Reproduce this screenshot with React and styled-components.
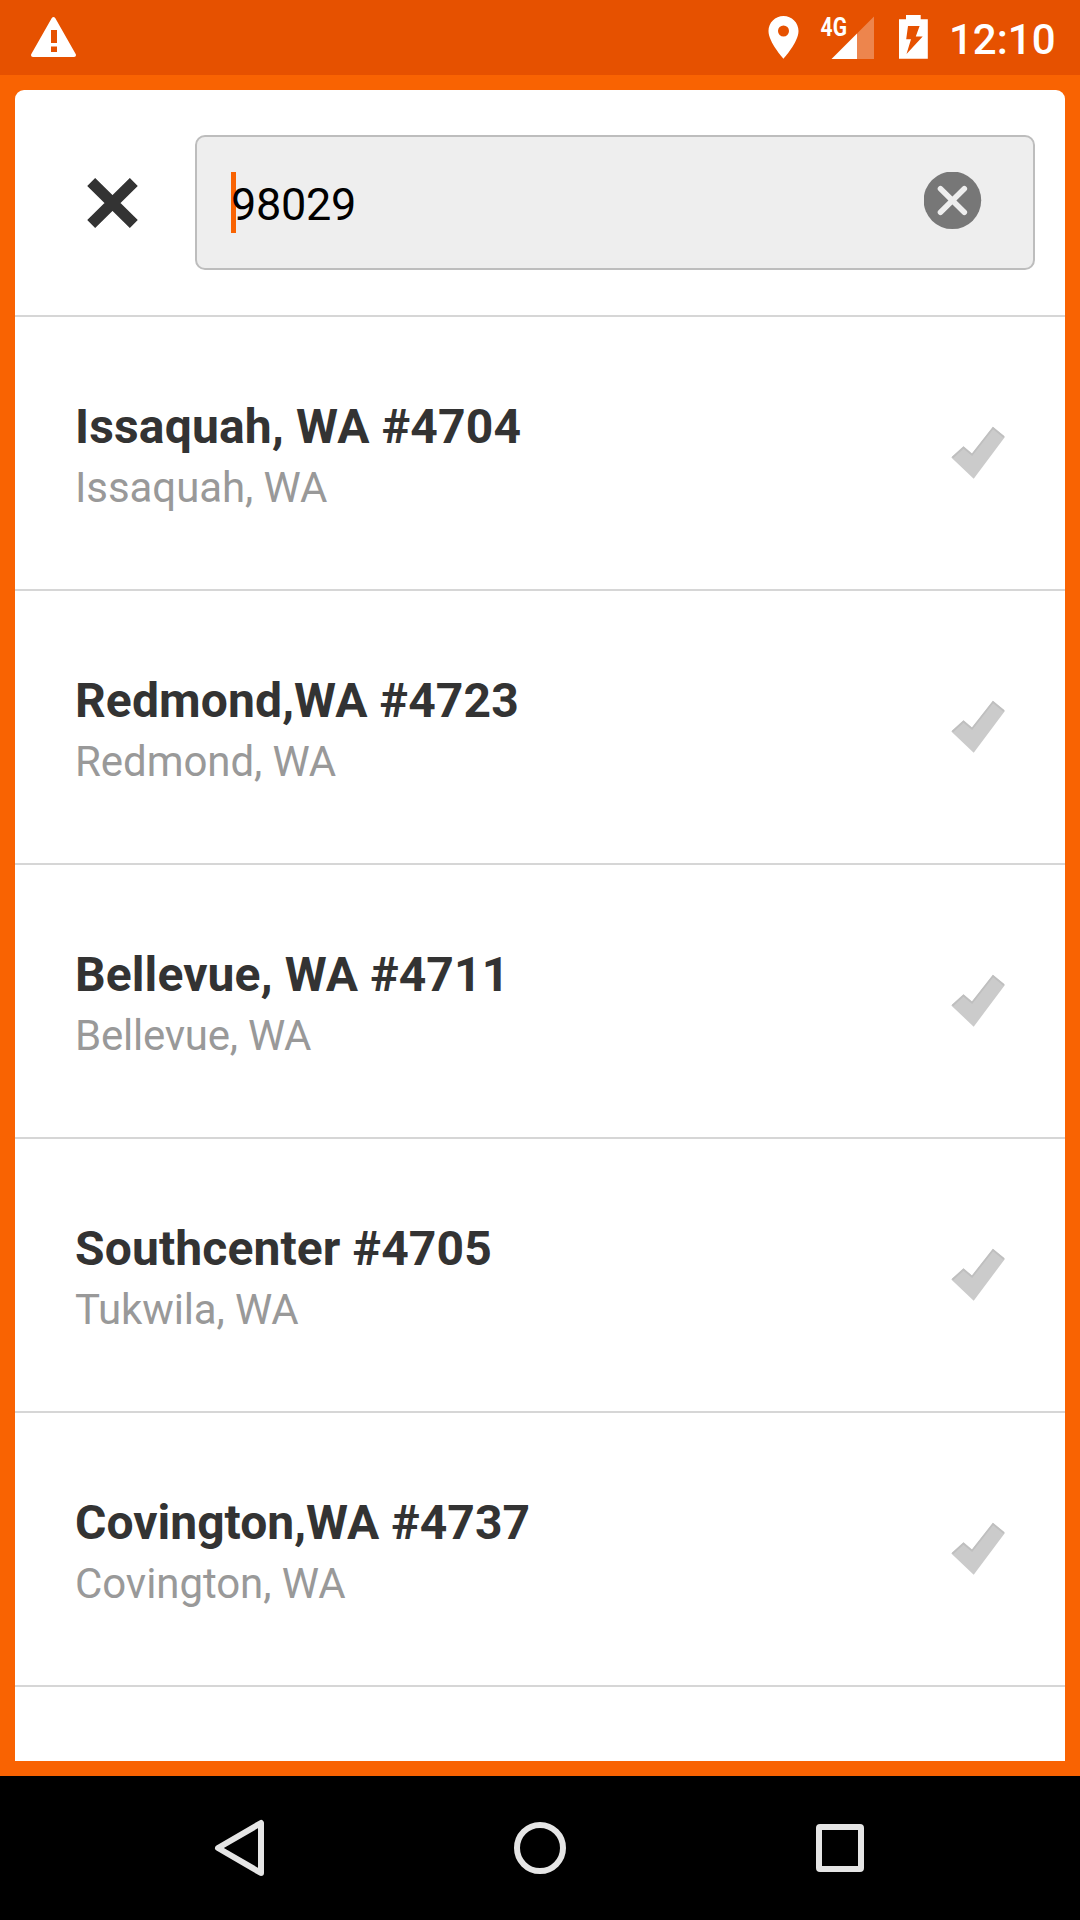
import React from "react";
import styled, { createGlobalStyle } from "styled-components";

const Global = createGlobalStyle`
  * { box-sizing: border-box; }
  body { margin: 0; background: #000; font-family: Roboto, "Liberation Sans", sans-serif; }
`;

const Screen = styled.div`
  width: 1080px;
  height: 1920px;
  display: flex;
  flex-direction: column;
  overflow: hidden;
  background: #f96302;
`;

const StatusBar = styled.header`
  height: 75px;
  flex: none;
  display: flex;
  align-items: center;
  padding: 0 24px 0 31px;
  background: #e65100;
`;

const StatusIcons = styled.div`
  margin-left: auto;
  display: flex;
  align-items: center;
`;

const Glyph = styled.svg`
  display: block;
  flex: none;
  width: ${(p) => p.$w}px;
  height: ${(p) => p.$h}px;
  margin-right: ${(p) => p.$gap || 0}px;
`;

const Clock = styled.time`
  width: 107px;
  font-size: 42px;
  line-height: 50px;
  font-weight: 500;
  color: #fff;
  white-space: nowrap;
  padding-top: 5px;
`;

const Content = styled.main`
  flex: 1;
  min-height: 0;
  padding: 15px;
  display: flex;
`;

const Card = styled.section`
  flex: 1;
  display: flex;
  flex-direction: column;
  background: #fff;
  border-radius: 9px 9px 0 0;
  overflow: hidden;
`;

const SearchBar = styled.div`
  height: 227px;
  flex: none;
  display: flex;
  align-items: center;
  padding: 0 30px 0 72px;
  border-bottom: 2px solid #d6d6d6;
`;

const IconButton = styled.button`
  display: block;
  border: 0;
  padding: 0;
  background: none;
  margin-right: ${(p) => p.$gap || 0}px;
`;

const Field = styled.div`
  flex: 1;
  height: 135px;
  display: flex;
  align-items: center;
  justify-content: space-between;
  padding: 0 51px 4px 34px;
  border: 2px solid #bdbdbd;
  border-radius: 10px;
  background: #eee;
`;

const Query = styled.div`
  display: flex;
  align-items: center;
  height: 61px;
  margin-top: 4px;
  font-size: 45px;
  line-height: 61px;
  letter-spacing: -0.3px;
  color: #000;
`;

const Caret = styled.span`
  width: 5px;
  height: 61px;
  margin-right: -5px;
  background: #f96302;
`;

const QueryText = styled.span`
  padding-top: 4px;
  z-index: 1;
`;

const StoreList = styled.ul`
  margin: 0;
  padding: 0;
  list-style: none;
`;

const StoreRow = styled.li`
  height: 274px;
  display: flex;
  align-items: center;
  justify-content: space-between;
  padding: 0 60px;
  border-bottom: 2px solid #d6d6d6;
`;

const StoreText = styled.div`
  display: flex;
  flex-direction: column;
  gap: 8px;
  padding-top: 4px;
`;

const StoreName = styled.div`
  font-size: 48px;
  line-height: 56px;
  font-weight: 700;
  letter-spacing: ${(p) => p.$tracking}px;
  color: #333;
`;

const StoreCity = styled.div`
  font-size: 42px;
  line-height: 49px;
  letter-spacing: ${(p) => p.$tracking}px;
  color: #999;
`;

const NavBar = styled.nav`
  height: 144px;
  flex: none;
  display: flex;
  align-items: center;
  justify-content: center;
  gap: 240px;
  background: #000;
`;

const stores = [
  { name: "Issaquah, WA #4704", city: "Issaquah, WA", nameTracking: 0.17, cityTracking: -0.07 },
  { name: "Redmond,WA #4723", city: "Redmond, WA", nameTracking: 0.12, cityTracking: -0.07 },
  { name: "Bellevue, WA #4711", city: "Bellevue, WA", nameTracking: 0.12, cityTracking: -0.24 },
  { name: "Southcenter #4705", city: "Tukwila, WA", nameTracking: 0.12, cityTracking: -0.12 },
  { name: "Covington,WA #4737", city: "Covington, WA", nameTracking: 0.02, cityTracking: -0.06 },
];

const Warning = () => (
  <Glyph $w={45} $h={75} viewBox="31 0 45 75">
    <path
      fill="#fff"
      fillRule="evenodd"
      d="M51.8 18 Q53.5 15.8 55.2 18 L75.8 54.2 Q76.6 57 74 57 H33 Q30.4 57 31.2 54.2 Z M51 30 V43 H57 V30 Z M51 46.5 V52 H57 V46.5 Z"
    />
  </Glyph>
);

const Pin = () => (
  <Glyph $w={31} $h={75} $gap={21} viewBox="768 0 31 75">
    <path
      fill="#fff"
      fillRule="evenodd"
      d="M783.5 16 C775.2 16 768.5 22.7 768.5 31 C768.5 42.2 783.5 58.7 783.5 58.7 C783.5 58.7 798.5 42.2 798.5 31 C798.5 22.7 791.8 16 783.5 16 Z M783.5 25.5 A5.5 5.5 0 1 1 783.5 36.5 A5.5 5.5 0 1 1 783.5 25.5 Z"
    />
  </Glyph>
);

const Signal = () => (
  <Glyph $w={54} $h={75} $gap={25} viewBox="820 0 54 75">
    <path fill="#fff" fillOpacity="0.3" d="M857 33.5 L874 16.5 V59 H857 Z" />
    <path fill="#fff" d="M831.5 59 L857 33.5 V59 Z" />
    <text
      x="820.6"
      y="35.5"
      fill="#fff"
      fontFamily="Roboto, sans-serif"
      fontSize="25"
      fontWeight="700"
      textLength="26.4"
      lengthAdjust="spacingAndGlyphs"
    >
      4G
    </text>
  </Glyph>
);

const Battery = () => (
  <Glyph $w={29} $h={75} $gap={21} viewBox="899 0 29 75">
    <path
      fill="#fff"
      fillRule="evenodd"
      d="M906 15 H920.7 V19.3 H927.8 V58.8 H899 V19.3 H906 Z M908 26 L906.2 39.2 H911 L906.5 54 L922.7 36.6 H915.8 L919.6 26 Z"
    />
  </Glyph>
);

const Close = () => (
  <Glyph $w={51} $h={50} viewBox="87 178 51 50">
    <path d="M91.2 182 L133.8 224 M133.8 182 L91.2 224" stroke="#333" strokeWidth="11.3" fill="none" />
  </Glyph>
);

const Clear = () => (
  <Glyph $w={58} $h={58} viewBox="924 172 58 58">
    <circle cx="952.4" cy="200.3" r="28.8" fill="#777" />
    <path
      d="M940.5 188.8 L964.3 212.2 M964.3 188.8 L940.5 212.2"
      stroke="#eee"
      strokeWidth="5.6"
      strokeLinecap="round"
    />
  </Glyph>
);

const Check = () => (
  <Glyph $w={54} $h={54} viewBox="951 426 54 54">
    <path fill="#cbcbcb" d="M951.3 457.5 L963.5 446.5 L972 453.8 L993 427 L1004.9 437 L973.7 478.7 Z" />
    <path
      fill="none"
      stroke="#bfbfbf"
      strokeWidth="1.8"
      d="M952.5 457.5 L963.5 447.5 L972 454.8 L993 428 L1004 437"
    />
  </Glyph>
);

export default function App() {
  return (
    <Screen>
      <Global />
      <StatusBar>
        <Warning />
        <StatusIcons>
          <Pin />
          <Signal />
          <Battery />
          <Clock>12:10</Clock>
        </StatusIcons>
      </StatusBar>
      <Content>
        <Card>
          <SearchBar>
            <IconButton $gap={57} aria-label="Close">
              <Close />
            </IconButton>
            <Field>
              <Query>
                <Caret />
                <QueryText>98029</QueryText>
              </Query>
              <IconButton aria-label="Clear">
                <Clear />
              </IconButton>
            </Field>
          </SearchBar>
          <StoreList>
            {stores.map((s) => (
              <StoreRow key={s.name}>
                <StoreText>
                  <StoreName $tracking={s.nameTracking}>{s.name}</StoreName>
                  <StoreCity $tracking={s.cityTracking}>{s.city}</StoreCity>
                </StoreText>
                <Check />
              </StoreRow>
            ))}
          </StoreList>
        </Card>
      </Content>
      <NavBar>
        <Glyph $w={60} $h={60} viewBox="210 1818 60 60">
          <path
            d="M218 1848 L261 1823 V1873 Z"
            fill="none"
            stroke="#e5e5e5"
            strokeWidth="6"
            strokeLinejoin="round"
          />
        </Glyph>
        <Glyph $w={60} $h={60} viewBox="510 1818 60 60">
          <circle cx="540" cy="1848" r="23" fill="none" stroke="#e5e5e5" strokeWidth="6" />
        </Glyph>
        <Glyph $w={60} $h={60} viewBox="810 1818 60 60">
          <rect x="819" y="1827" width="42" height="42" rx="1" fill="none" stroke="#e5e5e5" strokeWidth="6" strokeLinejoin="round" />
        </Glyph>
      </NavBar>
    </Screen>
  );
}
